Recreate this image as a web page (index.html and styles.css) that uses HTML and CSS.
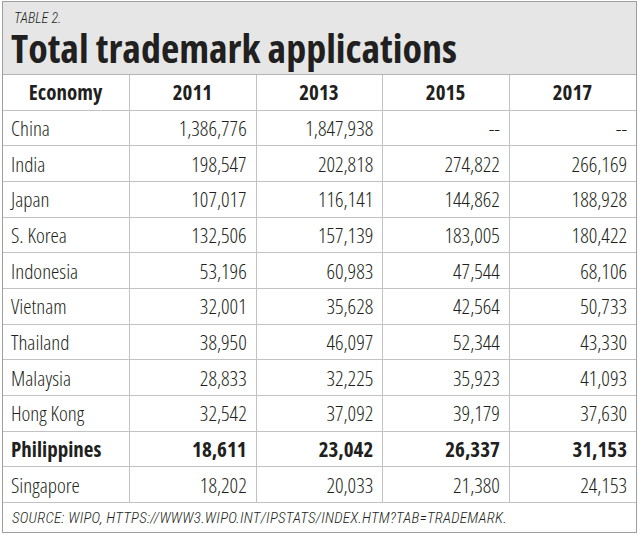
FILE: index.html
```html
<!DOCTYPE html>
<html>
<head>
<meta charset="utf-8">
<link rel="stylesheet" href="styles.css">
</head>
<body>
<div class="frame">
  <div class="head">
    <div class="label">TABLE 2.</div>
    <div class="title">Total trademark applications</div>
  </div>
  <table class="data">
    <thead>
      <tr><th>Economy</th><th>2011</th><th>2013</th><th>2015</th><th>2017</th></tr>
    </thead>
    <tbody>
      <tr><td>China</td><td>1,386,776</td><td>1,847,938</td><td>--</td><td>--</td></tr>
      <tr><td>India</td><td>198,547</td><td>202,818</td><td>274,822</td><td>266,169</td></tr>
      <tr><td>Japan</td><td>107,017</td><td>116,141</td><td>144,862</td><td>188,928</td></tr>
      <tr><td>S. Korea</td><td>132,506</td><td>157,139</td><td>183,005</td><td>180,422</td></tr>
      <tr><td>Indonesia</td><td>53,196</td><td>60,983</td><td>47,544</td><td>68,106</td></tr>
      <tr><td>Vietnam</td><td>32,001</td><td>35,628</td><td>42,564</td><td>50,733</td></tr>
      <tr><td>Thailand</td><td>38,950</td><td>46,097</td><td>52,344</td><td>43,330</td></tr>
      <tr><td>Malaysia</td><td>28,833</td><td>32,225</td><td>35,923</td><td>41,093</td></tr>
      <tr><td>Hong Kong</td><td>32,542</td><td>37,092</td><td>39,179</td><td>37,630</td></tr>
      <tr class="hl"><td>Philippines</td><td>18,611</td><td>23,042</td><td>26,337</td><td>31,153</td></tr>
      <tr><td>Singapore</td><td>18,202</td><td>20,033</td><td>21,380</td><td>24,153</td></tr>
    </tbody>
  </table>
  <div class="source">SOURCE: WIPO, HTTPS://WWW3.WIPO.INT/IPSTATS/INDEX.HTM?TAB=TRADEMARK.</div>
</div>
</body>
</html>
```
FILE: styles.css
```css
html, body {
  margin: 0;
  padding: 0;
  background: #ffffff;
}
body {
  font-family: "Open Sans", "DejaVu Sans Condensed", sans-serif;
  font-stretch: 75%;
  color: #221f20;
}
.frame {
  margin: 1px 3px 0 2px;
  width: 633px;
  height: 530px;
  border: 1px solid #9e9e9e;
  display: flex;
  flex-direction: column;
}
.head {
  background: #e6e6e6;
  height: 73px;
  box-sizing: border-box;
  padding: 9px 0 0 8px;
  border-bottom: 1px solid #b4b4b4;
}
.label {
  font-family: "Roboto Condensed", "Open Sans", sans-serif;
  font-style: italic;
  font-weight: 300;
  font-stretch: normal;
  font-size: 14px;
  line-height: 15px;
  padding-left: 3px;
}
.title {
  font-weight: bold;
  font-size: 40px;
  line-height: 44px;
  letter-spacing: 0;
}
.data {
  border-collapse: collapse;
  width: 100%;
  table-layout: fixed;
}
.data th, .data td {
  height: 35.7px;
  padding: 0 9px 0 8px;
  border-right: 1px solid #c2c2c2;
  border-bottom: 1px solid #c2c2c2;
  font-size: 21px;
  font-weight: 350;
  line-height: 24px;
  text-align: right;
  box-sizing: border-box;
}
.data th:last-child, .data td:last-child {
  border-right: none;
}
.data th {
  text-align: center;
  font-weight: bold;
  height: 35px;
}
.data td:first-child {
  text-align: left;
}
.data tr.hl td {
  font-weight: bold;
}
.source {
  flex: 1;
  font-family: "Roboto Condensed", "Open Sans", sans-serif;
  font-style: italic;
  font-weight: 300;
  font-stretch: normal;
  font-size: 15px;
  line-height: 18px;
  letter-spacing: 0.25px;
  padding: 6px 8px 0 9px;
}
```
